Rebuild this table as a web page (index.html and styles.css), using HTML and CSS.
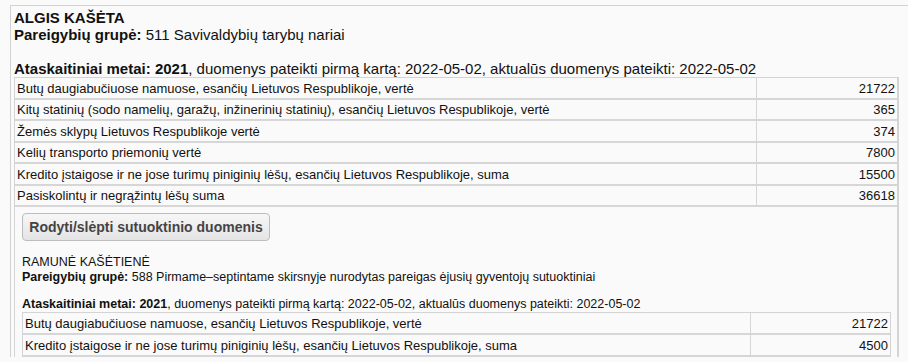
FILE: index.html
```html
<!DOCTYPE html>
<html lang="lt">
<head>
  <meta charset="UTF-8" />
  <meta name="viewport" content="width=device-width, initial-scale=1.0"/>
  <title>Turto deklaracija</title>
  <link rel="stylesheet" href="styles.css">
</head>
<body>

  <div class="declaration">
    <div class="person-name">ALGIS KAŠĖTA</div>
    <div><b>Pareigybių grupė:</b> 511 Savivaldybių tarybų nariai</div>
    <div class="year-line"><b>Ataskaitiniai metai: 2021</b>, duomenys pateikti pirmą kartą: 2022-05-02, aktualūs duomenys pateikti: 2022-05-02</div>

    <table class="assets">
      <tr><td>Butų daugiabučiuose namuose, esančių Lietuvos Respublikoje, vertė</td><td class="sum">21722</td></tr>
      <tr><td>Kitų statinių (sodo namelių, garažų, inžinerinių statinių), esančių Lietuvos Respublikoje, vertė</td><td class="sum">365</td></tr>
      <tr><td>Žemės sklypų Lietuvos Respublikoje vertė</td><td class="sum">374</td></tr>
      <tr><td>Kelių transporto priemonių vertė</td><td class="sum">7800</td></tr>
      <tr><td>Kredito įstaigose ir ne jose turimų piniginių lėšų, esančių Lietuvos Respublikoje, suma</td><td class="sum">15500</td></tr>
      <tr><td>Pasiskolintų ir negrąžintų lėšų suma</td><td class="sum">36618</td></tr>
      <tr>
        <td colspan="2" class="spouse-cell">
          <button class="spouse-toggle" onclick="toggleSpouse()">Rodyti/slėpti sutuoktinio duomenis</button>

          <div class="spouse" id="spouse">
            <div>RAMUNĖ KAŠĖTIENĖ</div>
            <div><b>Pareigybių grupė:</b> 588 Pirmame–septintame skirsnyje nurodytas pareigas ėjusių gyventojų sutuoktiniai</div>
            <div class="year-line"><b>Ataskaitiniai metai: 2021</b>, duomenys pateikti pirmą kartą: 2022-05-02, aktualūs duomenys pateikti: 2022-05-02</div>

            <table class="assets">
              <tr><td>Butų daugiabučiuose namuose, esančių Lietuvos Respublikoje, vertė</td><td class="sum">21722</td></tr>
              <tr><td>Kredito įstaigose ir ne jose turimų piniginių lėšų, esančių Lietuvos Respublikoje, suma</td><td class="sum">4500</td></tr>
            </table>
          </div>
        </td>
      </tr>
    </table>
  </div>

  <script>
  function toggleSpouse() {
    const spouse = document.getElementById('spouse');
    spouse.style.display = spouse.style.display === 'none' ? 'block' : 'none';
  }
  </script>

</body>
</html>
```

FILE: styles.css
```css
html {
  overflow: hidden;
}
body {
  margin: 0;
  background: #fafafa;
  font-family: "Liberation Sans", Arial, sans-serif;
  font-size: 15px;
  color: #111;
}
.declaration {
  margin: 5px 0 0 10px;
  padding: 3px 0 0 3px;
  border-top: 1px solid #d2d2d2;
  border-left: 1px solid #d2d2d2;
}
.person-name {
  font-weight: bold;
}
.year-line {
  margin-top: 17px;
}
.assets {
  width: 884px;
  border-collapse: separate;
  border-spacing: 0;
  font-size: 13px;
  line-height: 15px;
  border-left: 1px solid #d4d4d4;
  border-right: 2px solid #d4d4d4;
  border-top: 1px solid #d4d4d4;
}
.assets td {
  padding: 2.5px 2px 2px;
  border-bottom: 2px solid #d6d6d6;
}
.assets td.sum {
  width: 136px;
  text-align: right;
  border-left: 1px solid #d6d6d6;
}
.assets td.spouse-cell {
  padding: 6px 6px 0 7px;
  border-bottom: none;
}
.spouse-toggle {
  display: block;
  width: 248px;
  height: 28px;
  margin: 0 0 14px 0;
  font-family: "Liberation Sans", Arial, sans-serif;
  font-size: 14px;
  font-weight: bold;
  color: #444;
  background: linear-gradient(#f7f7f7, #e4e4e4);
  border: 1px solid #bdbdbd;
  border-radius: 4px;
  cursor: pointer;
}
.spouse {
  font-size: 12.5px;
  line-height: 15px;
}
.spouse .year-line {
  margin-top: 12px;
}
.spouse .assets {
  width: 869px;
  border-right-width: 1px;
}
.spouse .assets td {
  padding: 3px 2px 2px;
}
.spouse .assets td.sum {
  width: 135px;
}
```
